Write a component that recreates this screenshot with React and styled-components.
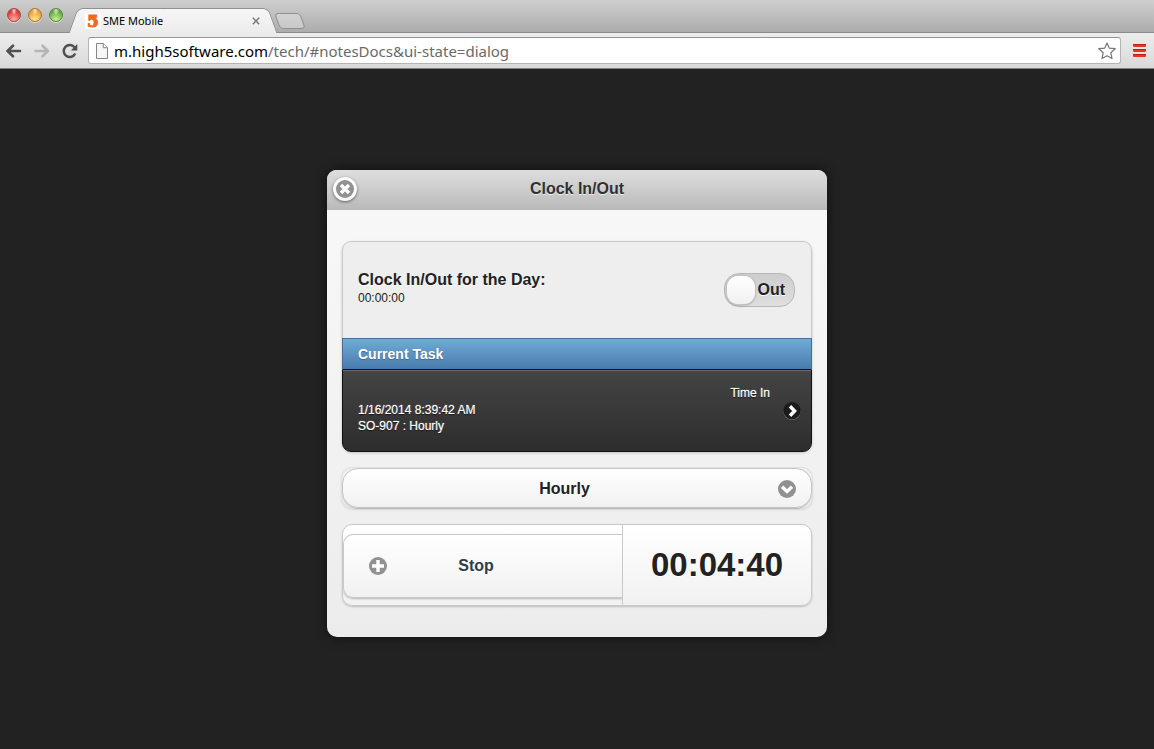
import { useState } from 'react';
import styled, { createGlobalStyle, css } from 'styled-components';

const GlobalStyle = createGlobalStyle`
    * {
        box-sizing: border-box;
    }

    body {
        margin: 0;
        background: #222;
        font-family: "Liberation Sans", Helvetica, Arial, sans-serif;
    }

    button, input, select {
        margin: 0;
        font-family: inherit;
    }

    svg {
        display: block;
    }
`;

/* ---- browser window ---- */

const Browser = styled.div`
    display: flex;
    flex-direction: column;
    min-height: 100vh;
`;

const TabStrip = styled.div`
    display: flex;
    align-items: flex-end;
    height: 33px;
    padding-left: 7px;
    background: linear-gradient(#cfcfcf, #acacac);
    border-bottom: 1px solid #8c8c8c;
`;

const Lights = styled.div`
    display: flex;
    gap: 7px;
    align-self: flex-start;
    margin-top: 8px;
`;

const Light = styled.button`
    width: 14px;
    height: 14px;
    padding: 0;
    border: 1px solid ${({ $edge }) => $edge};
    border-radius: 50%;
    background:
        radial-gradient(ellipse at 50% 12%, rgba(255, 255, 255, 0.8), transparent 34%),
        radial-gradient(circle at 50% 90%, ${({ $glow }) => $glow}, ${({ $color }) => $color} 75%);
    box-shadow: 0 1px 0 rgba(255, 255, 255, 0.5);
`;

const Tab = styled.div`
    position: relative;
    z-index: 1;
    display: flex;
    align-items: center;
    width: 200px;
    height: 25px;
    margin: 0 0 -1px 10px;
    padding: 0 13px 0 12px;
    font: 11px "Noto Sans", "Open Sans", sans-serif;
    color: #000;

    &::before,
    &::after {
        content: '';
        position: absolute;
        z-index: -1;
        top: 0;
        bottom: 0;
        width: 52%;
        background: linear-gradient(#f6f6f6, #ececec);
        border-top: 1px solid #8f8f8f;
    }

    &::before {
        left: 0;
        border-left: 1px solid #8f8f8f;
        border-top-left-radius: 6px;
        transform: skewX(-20deg);
    }

    &::after {
        right: 0;
        border-right: 1px solid #8f8f8f;
        border-top-right-radius: 6px;
        transform: skewX(20deg);
    }
`;

const Favicon = styled.span`
    width: 16px;
    height: 16px;
    margin-right: 2px;
    background: #fff;
    color: #ee6a1f;
    font: bold 17px/16px "DejaVu Serif", serif;
    text-align: center;
    -webkit-text-stroke: 1px #ee6a1f;
`;

const TabTitle = styled.span`
    flex: 1;
`;

const PlainButton = styled.button`
    display: flex;
    padding: 0;
    border: 0;
    background: none;
`;

const NewTab = styled.button`
    width: 26px;
    height: 16px;
    margin: 0 0 3px 4px;
    padding: 0;
    border: 1px solid #909090;
    border-radius: 4px;
    background: linear-gradient(#d3d3d3, #c8c8c8);
    transform: skewX(20deg);
`;

const Toolbar = styled.div`
    display: flex;
    align-items: center;
    height: 36px;
    padding: 0 8px 0 6px;
    background: linear-gradient(#ececec, #dadada);
    border-bottom: 1px solid #808080;
`;

const NavButtons = styled.div`
    display: flex;
    gap: 12px;
    margin-right: 10px;
`;

const AddressBar = styled.div`
    flex: 1;
    display: flex;
    align-items: center;
    height: 27px;
    margin-right: 12px;
    padding: 0 4px 0 7px;
    background: #fff;
    border: 1px solid #b4b4b4;
    border-top-color: #959595;
    border-radius: 3px;
`;

const Url = styled.a`
    flex: 1;
    margin-left: 6px;
    font: 15px "Noto Sans", "Open Sans", sans-serif;
    color: #6a6a6a;
    text-decoration: none;
    white-space: nowrap;
`;

const Host = styled.span`
    color: #000;
`;

/* ---- dialog ---- */

const Viewport = styled.main`
    flex: 1;
    padding: 101px 16px 32px;
`;

const Dialog = styled.section`
    max-width: 500px;
    margin: 0 auto;
    background: linear-gradient(#f9f9f9, #ececec);
    border-radius: 10px;
    box-shadow: 0 0 12px rgba(0, 0, 0, 0.6);
    color: #222;
`;

const Header = styled.header`
    display: grid;
    grid-template-columns: 24px 1fr 24px;
    align-items: center;
    height: 40px;
    padding: 0 6px 2px;
    background: linear-gradient(#dedede, #b9b9b9);
    border-radius: 9px 9px 0 0;
`;

const CloseButton = styled.button`
    display: flex;
    align-items: center;
    justify-content: center;
    width: 24px;
    height: 24px;
    padding: 0;
    border: 0;
    border-radius: 50%;
    background: #fafafa;
    box-shadow: 0 1px 3px rgba(0, 0, 0, 0.5);
`;

const Title = styled.h1`
    margin: 0;
    font-size: 16px;
    line-height: 20px;
    text-align: center;
    color: #303030;
    text-shadow: 0 1px 0 #eee;
`;

const Content = styled.div`
    display: flex;
    flex-direction: column;
    gap: 16px;
    padding: 31px 15px;
`;

const List = styled.ul`
    margin: 0;
    padding: 0;
    list-style: none;
    border-radius: 10px;
    box-shadow: 0 1px 3px rgba(0, 0, 0, 0.2);
`;

const DayRow = styled.li`
    display: flex;
    align-items: center;
    justify-content: space-between;
    height: 97px;
    padding: 0 16px 0 15px;
    background: #eee;
    border: 1px solid #c9c9c9;
    border-bottom: 0;
    border-radius: 9px 9px 0 0;
`;

const DayText = styled.div`
    padding-bottom: 4px;
`;

const DayTitle = styled.h2`
    margin: 0;
    font-size: 16px;
    line-height: 20px;
    text-shadow: 0 1px 0 #fff;
`;

const Small = styled.div`
    font-size: 12px;
    line-height: 16px;
    ${({ $end }) => $end && css`
        align-self: flex-start;
        padding-top: 15px;
    `}
`;

const Switch = styled.label`
    position: relative;
    display: flex;
    align-items: center;
    justify-content: ${({ $on }) => ($on ? 'flex-start' : 'flex-end')};
    width: 71px;
    height: 34px;
    padding: 0 9px;
    border: 1px solid #b8b8b8;
    border-radius: 15px;
    background: ${({ $on }) => ($on ? 'linear-gradient(#5393c5, #6facd5)' : 'linear-gradient(#cdcdcd, #dfdfdf)')};
    font-size: 16px;
    font-weight: bold;
    text-shadow: 0 1px 0 #fff;

    input {
        position: absolute;
        inset: 0;
        width: 100%;
        height: 100%;
        opacity: 0;
    }

    &::before {
        content: '';
        position: absolute;
        top: 2px;
        ${({ $on }) => ($on ? 'right' : 'left')}: 2px;
        width: 28px;
        height: 28px;
        border-radius: 11px;
        background: linear-gradient(#fff, #f1f1f1);
        box-shadow: 0 0 0 1px #c2c2c2, 0 1px 3px rgba(0, 0, 0, 0.3);
    }
`;

const Divider = styled.li`
    height: 31px;
    padding-left: 15px;
    border: 1px solid #456f9a;
    border-bottom: 0;
    background: linear-gradient(#6facd5, #497bae);
    color: #fff;
    font-size: 14px;
    font-weight: bold;
    line-height: 30px;
    text-shadow: 0 1px 1px #3e6790;
`;

const TaskLink = styled.a`
    display: flex;
    align-items: center;
    height: 83px;
    padding: 0 10px 0 15px;
    border: 1px solid #111;
    border-radius: 0 0 9px 9px;
    background: linear-gradient(#444, #2d2d2d);
    box-shadow: inset 0 1px 0 #6a6a6a;
    color: #fff;
    text-decoration: none;
    text-shadow: 0 1px 1px #111, 0 0 1px #fff;
`;

const TaskInfo = styled.div`
    flex: 1;
    padding-top: 14px;
`;

const RowIcon = styled.div`
    margin-left: 13px;
`;

const SelectBox = styled.label`
    position: relative;
    display: block;
    height: 40px;
    border-radius: 10px;
    box-shadow: 0 0 0 1px #e3e3e3, 0 1px 3px rgba(0, 0, 0, 0.2);

    svg {
        position: absolute;
        top: 12px;
        right: 16px;
        pointer-events: none;
    }
`;

const Select = styled.select`
    appearance: none;
    display: block;
    width: 100%;
    height: 40px;
    padding: 0 41px 0 16px;
    border: 1px solid #c4c4c4;
    border-radius: 16px;
    background: linear-gradient(#fff, #f1f1f1);
    box-shadow: 0 1px 1px rgba(0, 0, 0, 0.2);
    color: #222;
    font-size: 16px;
    font-weight: bold;
    text-align: center;
    text-align-last: center;
    text-shadow: 0 1px 0 #fff;
`;

const TimerPanel = styled.div`
    display: grid;
    grid-template-columns: 279fr 189fr;
    height: 82px;
    overflow: hidden;
    border: 1px solid #c9c9c9;
    border-radius: 10px;
    background: linear-gradient(#fff, #f1f1f1);
    box-shadow: 0 1px 2px rgba(0, 0, 0, 0.2);
`;

const StopCell = styled.div`
    padding-top: 9px;
    overflow: hidden;
`;

const StopButton = styled.button`
    display: flex;
    align-items: center;
    width: 100%;
    height: 64px;
    padding: 0 57px 0 25px;
    border: 1px solid #c9c9c9;
    border-right: 0;
    border-radius: 10px 0 0 10px;
    background: linear-gradient(#fff, #f1f1f1);
    box-shadow: 0 1px 2px rgba(0, 0, 0, 0.25);
    color: #2f3e46;
    font-size: 16px;
    font-weight: bold;
    text-shadow: 0 1px 0 #fff;

    span {
        flex: 1;
    }
`;

const Timer = styled.time`
    display: flex;
    align-items: center;
    justify-content: center;
    border-left: 1px solid #c9c9c9;
    font-size: 33px;
    font-weight: bold;
    text-shadow: 0 1px 0 #fff;
`;

/* ---- icons ---- */

const discShapes = {
    close: 'M5 5l8 8M13 5l-8 8',
    plus: 'M9 3v12M3 9h12',
    down: 'M4 6.8l5 4.6 5-4.6',
    right: 'M7 4.2L11.6 9 7 13.8',
};

const Disc = ({ shape, fill = '#919191' }) => (
    <svg width="18" height="18" viewBox="0 0 18 18" aria-hidden="true">
        {shape === 'right' && <circle cx="9" cy="9.5" r="8.5" fill="#8a8a8a" />}
        <circle cx="9" cy={shape === 'right' ? 8.7 : 9} r={shape === 'right' ? 8.7 : 9} fill={fill} />
        <path d={discShapes[shape]} fill="none" stroke="#fff" strokeWidth="3.4" />
    </svg>
);

const Arrow = ({ color, flip }) => (
    <svg width="16" height="16" viewBox="0 0 16 16" fill="none" stroke={color} strokeWidth="2.6" strokeLinecap="round" strokeLinejoin="round">
        <path d={flip ? 'M1.5 8h12.5M8.5 2.7L14 8l-5.5 5.3' : 'M14 8H1.5M7 2.7L1.5 8 7 13.3'} />
    </svg>
);

const Reload = () => (
    <svg width="16" height="16" viewBox="0 0 16 16">
        <path d="M13.2 10.5a6 6 0 1 1-.7-6.2" fill="none" stroke="#505050" strokeWidth="2.5" />
        <path d="M15.3 1v6.5H8.8z" fill="#505050" />
    </svg>
);

const PageIcon = () => (
    <svg width="12" height="16" viewBox="0 0 12 16" fill="#f6f6f6" stroke="#858585">
        <path d="M.5.5h6.8l4.2 4.2v10.8H.5z" />
        <path d="M7.3.5v4.2h4.2" fill="#fff" />
    </svg>
);

const Star = () => (
    <svg width="18" height="18" viewBox="0 0 18 18" fill="#fff" stroke="#777" strokeWidth="1.2" strokeLinejoin="round">
        <path d="M9 1l2.2 5.1 6 .6-4.4 4 1.2 5.9L9 13.7l-5 2.9 1.2-5.9-4.4-4 6-.6z" />
    </svg>
);

const MenuIcon = () => (
    <svg width="13" height="13" viewBox="0 0 13 13">
        {[0, 5, 10].map((y) => (
            <g key={y}>
                <rect y={y} width="13" height="3" rx="1" fill="#e2352c" />
                <rect y={y} width="13" height="1" fill="#b92019" />
            </g>
        ))}
    </svg>
);

const lights = [
    { name: 'Close window', $color: '#d93434', $glow: '#ffb0a8', $edge: '#a84444' },
    { name: 'Minimize', $color: '#e89a34', $glow: '#ffea8c', $edge: '#a8743a' },
    { name: 'Zoom', $color: '#5fa63c', $glow: '#c8f294', $edge: '#55863f' },
];

const App = () => {
    const [clockedIn, setClockedIn] = useState(false);

    return (
        <Browser>
            <GlobalStyle />
            <TabStrip>
                <Lights>
                    {lights.map(({ name, ...colors }) => (
                        <Light key={name} aria-label={name} {...colors} />
                    ))}
                </Lights>
                <Tab>
                    <Favicon>5</Favicon>
                    <TabTitle>SME Mobile</TabTitle>
                    <PlainButton aria-label="Close tab">
                        <svg width="8" height="8" viewBox="0 0 8 8" stroke="#777" strokeWidth="1.5">
                            <path d="M.8.8l6.4 6.4M7.2.8L.8 7.2" />
                        </svg>
                    </PlainButton>
                </Tab>
                <NewTab aria-label="New tab" />
            </TabStrip>

            <Toolbar>
                <NavButtons>
                    <PlainButton aria-label="Back"><Arrow color="#505050" /></PlainButton>
                    <PlainButton aria-label="Forward"><Arrow color="#b5b5b5" flip /></PlainButton>
                    <PlainButton aria-label="Reload"><Reload /></PlainButton>
                </NavButtons>
                <AddressBar>
                    <PageIcon />
                    <Url href="#notesDocs">
                        <Host>m.high5software.com</Host>/tech/#notesDocs&amp;ui-state=dialog
                    </Url>
                    <PlainButton aria-label="Bookmark"><Star /></PlainButton>
                </AddressBar>
                <PlainButton aria-label="Menu"><MenuIcon /></PlainButton>
            </Toolbar>

            <Viewport>
                <Dialog role="dialog" aria-labelledby="dialog-title">
                    <Header>
                        <CloseButton aria-label="Close"><Disc shape="close" /></CloseButton>
                        <Title id="dialog-title">Clock In/Out</Title>
                    </Header>

                    <Content>
                        <List>
                            <DayRow>
                                <DayText>
                                    <DayTitle>Clock In/Out for the Day:</DayTitle>
                                    <Small>00:00:00</Small>
                                </DayText>
                                <Switch $on={clockedIn}>
                                    <input
                                        type="checkbox"
                                        checked={clockedIn}
                                        onChange={(e) => setClockedIn(e.target.checked)}
                                    />
                                    {clockedIn ? 'In' : 'Out'}
                                </Switch>
                            </DayRow>
                            <Divider>Current Task</Divider>
                            <li>
                                <TaskLink href="#task">
                                    <TaskInfo>
                                        <Small>1/16/2014 8:39:42 AM</Small>
                                        <Small>SO-907 : Hourly</Small>
                                    </TaskInfo>
                                    <Small $end>Time In</Small>
                                    <RowIcon><Disc shape="right" fill="#1c1c1c" /></RowIcon>
                                </TaskLink>
                            </li>
                        </List>

                        <SelectBox>
                            <Select aria-label="Pay type" defaultValue="Hourly">
                                <option>Hourly</option>
                            </Select>
                            <Disc shape="down" />
                        </SelectBox>

                        <TimerPanel>
                            <StopCell>
                                <StopButton>
                                    <Disc shape="plus" />
                                    <span>Stop</span>
                                </StopButton>
                            </StopCell>
                            <Timer>00:04:40</Timer>
                        </TimerPanel>
                    </Content>
                </Dialog>
            </Viewport>
        </Browser>
    );
};

export default App;
